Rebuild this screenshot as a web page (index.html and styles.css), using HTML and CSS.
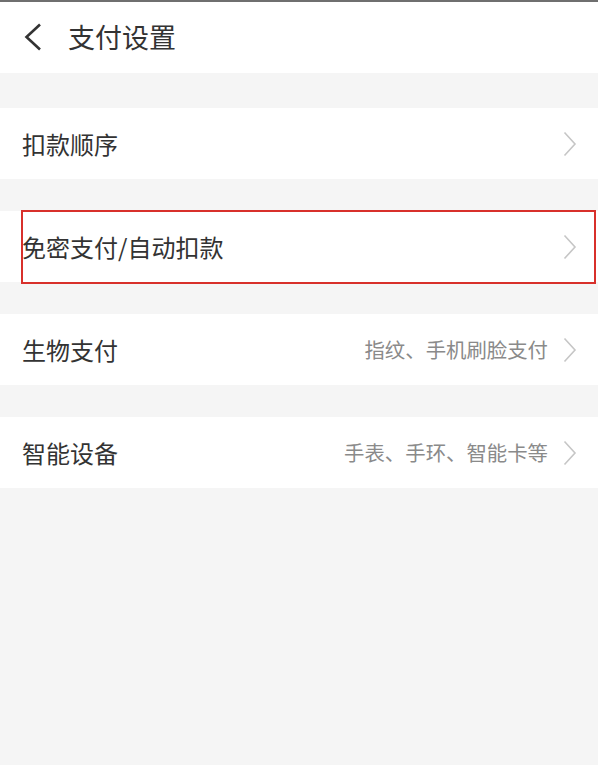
FILE: index.html
```html
<!DOCTYPE html>
<html lang="zh-CN">
<head>
  <meta charset="UTF-8">
  <meta name="viewport" content="width=device-width, initial-scale=1.0">
  <title>支付设置</title>
  <link rel="stylesheet" href="styles.css">
</head>
<body>
  <div class="topline"></div>
  <header class="header">
    <svg class="back" width="20" height="28" viewBox="0 0 20 28">
      <polyline points="17,1.5 3.5,14 17,26.5" fill="none" stroke="#333" stroke-width="2.6" stroke-linejoin="miter"/>
    </svg>
    <h1 class="title">支付设置</h1>
  </header>

  <div class="row first">
    <span class="label">扣款顺序</span>
    <span class="right">
      <svg class="arrow" width="14" height="26" viewBox="0 0 14 26"><polyline points="1.5,1.5 12,13 1.5,24.5" fill="none" stroke="#c6c6c6" stroke-width="1.6"/></svg>
    </span>
  </div>

  <div class="row marked">
    <span class="label">免密支付/自动扣款</span>
    <span class="right">
      <svg class="arrow" width="14" height="26" viewBox="0 0 14 26"><polyline points="1.5,1.5 12,13 1.5,24.5" fill="none" stroke="#c6c6c6" stroke-width="1.6"/></svg>
    </span>
  </div>

  <div class="row">
    <span class="label">生物支付</span>
    <span class="right">
      <span class="value">指纹、手机刷脸支付</span>
      <svg class="arrow" width="14" height="26" viewBox="0 0 14 26"><polyline points="1.5,1.5 12,13 1.5,24.5" fill="none" stroke="#c6c6c6" stroke-width="1.6"/></svg>
    </span>
  </div>

  <div class="row">
    <span class="label">智能设备</span>
    <span class="right">
      <span class="value">手表、手环、智能卡等</span>
      <svg class="arrow" width="14" height="26" viewBox="0 0 14 26"><polyline points="1.5,1.5 12,13 1.5,24.5" fill="none" stroke="#c6c6c6" stroke-width="1.6"/></svg>
    </span>
  </div>
</body>
</html>
```

FILE: styles.css
```css
body {
  margin: 0;
  height: 100vh;
  background: #f5f5f5;
  font-family: "Noto Sans CJK SC", "Noto Sans", sans-serif;
  color: #333;
  overflow: hidden;
}
.topline {
  height: 2px;
  background: #6f6f6f;
}
.header {
  height: 71px;
  background: #fff;
  display: flex;
  align-items: center;
  padding-left: 23px;
}
.back {
  display: block;
  margin-top: -2px;
}
.title {
  margin: 0 0 0 25px;
  font-size: 27px;
  font-weight: normal;
  line-height: 1;
  margin-top: -3px;
}
.row {
  height: 71px;
  margin-top: 32px;
  background: #fff;
  display: flex;
  align-items: center;
  justify-content: space-between;
  padding: 0 21px 0 22px;
  position: relative;
}
.row.first {
  margin-top: 35px;
}
.label {
  font-size: 24px;
  line-height: 1;
}
.right {
  display: flex;
  align-items: center;
}
.value {
  font-size: 20.4px;
  color: #8a8a8a;
  line-height: 1;
  margin-right: 15px;
}
.arrow {
  display: block;
}
.marked::after {
  content: "";
  position: absolute;
  left: 21px;
  right: 2px;
  top: -1px;
  bottom: -2px;
  border: 2px solid #d8302b;
}
```
